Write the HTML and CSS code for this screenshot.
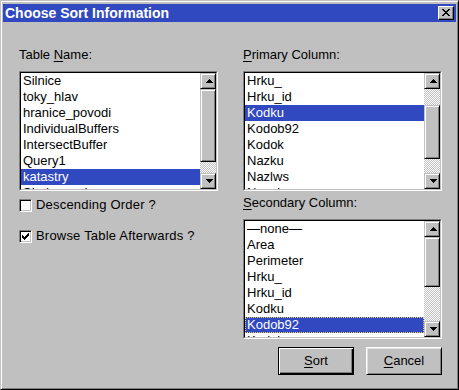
FILE: index.html
```html
<!DOCTYPE html>
<html>
<head>
<meta charset="utf-8">
<title>Choose Sort Information</title>
<link rel="stylesheet" href="styles.css">
</head>
<body>
<div class="window">
  <div class="titlebar">
    <span class="title">Choose Sort Information</span>
    <div class="close">
      <svg width="8" height="7" viewBox="0 0 8 7"><path d="M0 0h2v1H0zM6 0h2v1H6zM1 1h2v1H1zM5 1h2v1H5zM2 2h4v1H2zM3 3h2v1H3zM2 4h4v1H2zM1 5h2v1H1zM5 5h2v1H5zM0 6h2v1H0zM6 6h2v1H6z" fill="#000"/></svg>
    </div>
  </div>
  <div class="content">
    <div class="col">
      <div class="label">Table <u>N</u>ame:</div>
      <div class="listbox">
        <div class="listbox-inner">
          <ul class="items">
            <li>Silnice</li>
            <li>toky_hlav</li>
            <li>hranice_povodi</li>
            <li>IndividualBuffers</li>
            <li>IntersectBuffer</li>
            <li>Query1</li>
            <li class="sel">katastry</li>
            <li>Sjednoceni</li>
          </ul>
          <div class="scrollbar">
            <div class="sbtn"><svg width="12" height="12" viewBox="0 0 12 12"><path d="M7 4h1v1H7zM6 5h3v1H6zM5 6h5v1H5zM4 7h7v1H4z" fill="#000"/></svg></div>
            <div class="track"><div class="thumb" style="margin-top:0;height:73px"></div></div>
            <div class="sbtn"><svg width="12" height="12" viewBox="0 0 12 12"><path d="M4 4h7v1H4zM5 5h5v1H5zM6 6h3v1H6zM7 7h1v1H7z" fill="#000"/></svg></div>
          </div>
        </div>
      </div>
      <div class="check first">
        <span class="box"></span>
        <span class="check-text">Descending Order ?</span>
      </div>
      <div class="check second">
        <span class="box"><svg width="7" height="7" viewBox="0 0 7 7"><path d="M6 0h1v1H6zM5 1h2v1H5zM0 2h1v1H0zM4 2h3v1H4zM0 3h2v1H0zM3 3h3v1H3zM0 4h5v1H0zM1 5h3v1H1zM2 6h1v1H2z" fill="#000"/></svg></span>
        <span class="check-text">Browse Table Afterwards ?</span>
      </div>
    </div>
    <div class="col">
      <div class="label"><u>P</u>rimary Column:</div>
      <div class="listbox">
        <div class="listbox-inner">
          <ul class="items">
            <li>Hrku_</li>
            <li>Hrku_id</li>
            <li class="sel">Kodku</li>
            <li>Kodob92</li>
            <li>Kodok</li>
            <li>Nazku</li>
            <li>Nazlws</li>
            <li>Nazok</li>
          </ul>
          <div class="scrollbar">
            <div class="sbtn"><svg width="12" height="12" viewBox="0 0 12 12"><path d="M7 4h1v1H7zM6 5h3v1H6zM5 6h5v1H5zM4 7h7v1H4z" fill="#000"/></svg></div>
            <div class="track"><div class="thumb" style="margin-top:16px;height:54px"></div></div>
            <div class="sbtn"><svg width="12" height="12" viewBox="0 0 12 12"><path d="M4 4h7v1H4zM5 5h5v1H5zM6 6h3v1H6zM7 7h1v1H7z" fill="#000"/></svg></div>
          </div>
        </div>
      </div>
      <div class="label second-label"><u>S</u>econdary Column:</div>
      <div class="listbox">
        <div class="listbox-inner">
          <ul class="items">
            <li>—none—</li>
            <li>Area</li>
            <li>Perimeter</li>
            <li>Hrku_</li>
            <li>Hrku_id</li>
            <li>Kodku</li>
            <li class="sel focus">Kodob92</li>
            <li>Kodok</li>
          </ul>
          <div class="scrollbar">
            <div class="sbtn"><svg width="12" height="12" viewBox="0 0 12 12"><path d="M7 4h1v1H7zM6 5h3v1H6zM5 6h5v1H5zM4 7h7v1H4z" fill="#000"/></svg></div>
            <div class="track"><div class="thumb" style="margin-top:0;height:50px"></div></div>
            <div class="sbtn"><svg width="12" height="12" viewBox="0 0 12 12"><path d="M4 4h7v1H4zM5 5h5v1H5zM6 6h3v1H6zM7 7h1v1H7z" fill="#000"/></svg></div>
          </div>
        </div>
      </div>
      <div class="buttons">
        <div class="btn default"><span><u>S</u>ort</span></div>
        <div class="btn"><span><u>C</u>ancel</span></div>
      </div>
    </div>
  </div>
</div>
</body>
</html>
```

FILE: styles.css
```css
* { box-sizing: border-box; }
html, body {
  margin: 0;
  padding: 0;
  background: #c0c0c0;
}
body {
  font-family: "Liberation Sans", Arial, sans-serif;
  font-size: 13px;
  color: #000;
}
.window {
  width: 459px;
  height: 390px;
  background: #c0c0c0;
  border: 1px solid;
  border-color: #c0c0c0 #000 #000 #c0c0c0;
  box-shadow: inset 1px 1px #fff, inset -1px -1px #808080;
  padding: 3px 2px 2px 2px;
  display: flex;
  flex-direction: column;
}
.titlebar {
  height: 18px;
  background: #3048c0;
  display: flex;
  align-items: center;
  justify-content: space-between;
  padding: 0 2px 0 2px;
}
.title {
  color: #fff;
  font-weight: bold;
  font-size: 14px;
  line-height: 18px;
  white-space: nowrap;
}
.close {
  width: 16px;
  height: 14px;
  background: #c0c0c0;
  border: 1px solid;
  border-color: #fff #000 #000 #fff;
  box-shadow: inset -1px -1px #808080;
  padding: 2px 0 0 3px;
  display: flex;
  align-items: flex-start;
}
.close svg { display: block; }

.content {
  flex: 1;
  display: grid;
  grid-template-columns: 199px 199px;
  column-gap: 25px;
  padding: 25px 0 0 16px;
}
.col {
  display: flex;
  flex-direction: column;
}
.label {
  height: 16px;
  line-height: 16px;
  margin-bottom: 8px;
  white-space: nowrap;
}
.second-label { margin-top: 4px; }

.listbox {
  width: 199px;
  height: 120px;
  border: 1px solid;
  border-color: #808080 #fff #fff #808080;
}
.listbox-inner {
  height: 100%;
  border: 1px solid;
  border-color: #000 #c0c0c0 #c0c0c0 #000;
  display: flex;
  background: #fff;
}
.items {
  flex: 1;
  margin: 0;
  padding: 0;
  list-style: none;
  overflow: hidden;
}
.items li {
  height: 16px;
  line-height: 16px;
  padding-left: 2px;
  white-space: nowrap;
}
.items li.sel {
  background: #3048c0;
  color: #fff;
}
.items li.focus {
  outline: 1px dotted #e8d060;
  outline-offset: -1px;
}
.scrollbar {
  width: 16px;
  display: flex;
  flex-direction: column;
}
.sbtn, .thumb {
  background: #c0c0c0;
  border: 1px solid;
  border-color: #c0c0c0 #000 #000 #c0c0c0;
  box-shadow: inset 1px 1px #fff, inset -1px -1px #808080;
}
.sbtn {
  width: 16px;
  height: 16px;
  padding: 1px;
}
.sbtn svg { display: block; }
.track {
  flex: 1;
  background-color: #c0c0c0;
  background-image: conic-gradient(#fff 0 25%, #c0c0c0 0 50%, #fff 0 75%, #c0c0c0 0);
  background-size: 2px 2px;
}
.thumb {
  width: 16px;
}

.check {
  display: flex;
  align-items: flex-start;
  gap: 4px;
  height: 16px;
  line-height: 16px;
  white-space: nowrap;
}
.check-text { letter-spacing: 0.2px; }
.check.first { margin-top: 6px; }
.check.second { margin-top: 15px; }
.box {
  width: 13px;
  height: 13px;
  margin-top: 2px;
  background: #fff;
  border: 1px solid;
  border-color: #808080 #fff #fff #808080;
  box-shadow: inset 1px 1px #000, inset -1px -1px #c0c0c0;
  padding: 2px;
  display: flex;
}
.box svg { display: block; }

.buttons {
  display: flex;
  justify-content: flex-end;
  gap: 12px;
  margin-top: 8px;
}
.btn {
  width: 76px;
  height: 28px;
  border: 1px solid;
  border-color: #fff #000 #000 #fff;
  box-shadow: inset 1px 1px #dfdfdf, inset -1px -1px #808080;
  display: flex;
  align-items: center;
  justify-content: center;
  line-height: 16px;
}
.btn.default {
  border-color: #000;
  box-shadow: inset 1px 1px #fff, inset -1px -1px #000, inset -2px -2px #808080;
}
u { text-underline-offset: 2px; }
```
